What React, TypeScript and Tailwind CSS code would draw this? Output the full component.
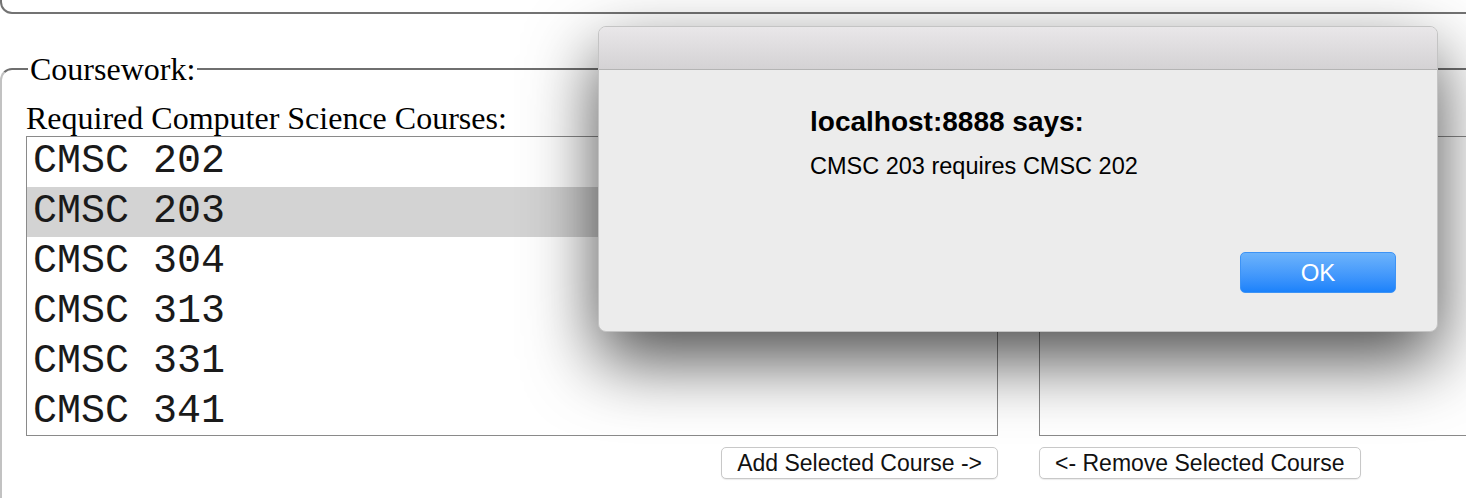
import React from 'react';

const required = ['CMSC 202', 'CMSC 203', 'CMSC 304', 'CMSC 313', 'CMSC 331', 'CMSC 341'];
const selectedCourse = 'CMSC 203';

const CourseList: React.FC<{ items: string[]; selected?: string }> = ({ items, selected }) => (
  <div className="w-[972px] h-[300px] overflow-hidden border border-[#8a8a8a] bg-white">
    {items.map((c) => (
      <div
        key={c}
        className={`h-[50px] leading-[50px] pl-[6px] text-[40px] font-['Liberation_Mono',monospace] text-[#1a1a1a] whitespace-pre ${
          c === selected ? 'bg-[#d3d3d3]' : ''
        }`}
      >
        {c}
      </div>
    ))}
  </div>
);

const PageButton: React.FC<{ label: string }> = ({ label }) => (
  <button className="h-[32px] px-[15px] rounded-[5px] border border-[#c8c8c8] bg-white text-[23px] leading-none text-[#111] font-['Liberation_Sans',Arial,sans-serif] shadow-[0_1px_1px_rgba(0,0,0,0.08)]">
    {label}
  </button>
);

const AlertDialog: React.FC = () => (
  <div className="absolute left-[598px] top-[26px] w-[840px] h-[306px] flex flex-col rounded-[8px] border border-[#c4c4c4] bg-[#ececec] overflow-hidden shadow-[0_28px_70px_rgba(0,0,0,0.7)] font-['Liberation_Sans',Arial,sans-serif]">
    <div className="h-[43px] shrink-0 bg-gradient-to-b from-[#e9e7e9] to-[#d4d2d4] border-b border-[#b4b4b4]" />
    <div className="pl-[211px] pt-[36px]">
      <div className="text-[28px] font-bold leading-[32px] text-black">localhost:8888 says:</div>
      <div className="mt-[15px] text-[23.5px] leading-[26px] text-black">CMSC 203 requires CMSC 202</div>
    </div>
    <div className="mt-auto flex justify-end pr-[41px] pb-[38px]">
      <button className="w-[156px] h-[41px] rounded-[5px] border border-[#3d93f5] bg-gradient-to-b from-[#6cb3fb] to-[#1a82fb] text-white text-[24px] leading-none">
        OK
      </button>
    </div>
  </div>
);

export default function App() {
  return (
    <div className="relative w-[1466px] h-[498px] overflow-hidden bg-white">
      {/* bottom edge of the previous fieldset */}
      <div className="w-[1480px] h-[14px] border-l-2 border-r-2 border-b-2 border-[#737373] rounded-b-[12px]" />

      <fieldset className="mt-[39px] w-[2100px] border-2 border-t-[#6f6f6f] border-l-[#c2c2c2] border-r-[#c2c2c2] border-b-[#c2c2c2] rounded-[12px] pt-[15px] px-[24px] pb-[60px] font-['Liberation_Serif','Times_New_Roman',serif] text-[32px] leading-[36px] text-black">
        <legend className="ml-[2px] px-[2px] leading-[32px]">Coursework:</legend>
        <div>Required Computer Science Courses:</div>
        <div className="flex gap-[41px]">
          <div className="flex flex-col items-end gap-[11px]">
            <CourseList items={required} selected={selectedCourse} />
            <PageButton label="Add Selected Course ->" />
          </div>
          <div className="flex flex-col items-start gap-[11px]">
            <CourseList items={[]} />
            <PageButton label="<- Remove Selected Course" />
          </div>
        </div>
      </fieldset>

      <AlertDialog />
    </div>
  );
}
